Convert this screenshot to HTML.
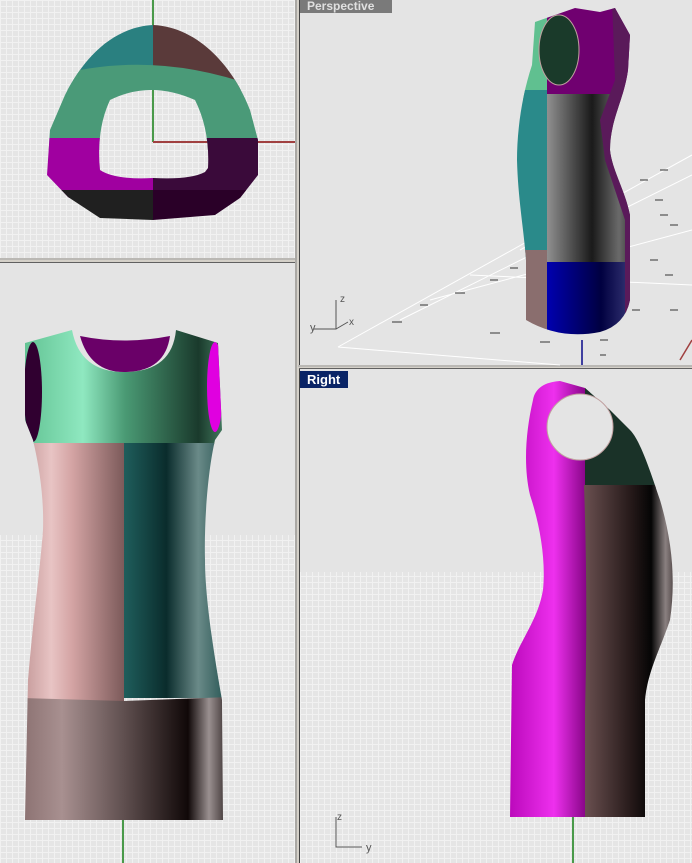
<!DOCTYPE html>
<html><head><meta charset="utf-8"><style>
html,body{margin:0;padding:0;background:#d4d0c8;}
svg{display:block}
text{font-family:"Liberation Sans",sans-serif;}
</style></head><body>
<svg width="692" height="863" viewBox="0 0 692 863" xmlns="http://www.w3.org/2000/svg">
<defs>
<pattern id="g" width="6" height="6" patternUnits="userSpaceOnUse"><rect width="6" height="6" fill="#e5e5e5"/><path d="M0 0.5H6M0.5 0V6" stroke="#f1f1f1" stroke-width="1"/></pattern>
<linearGradient id="pink" x1="0" x2="1"><stop offset="0" stop-color="#c09494"/><stop offset=".3" stop-color="#e8c4c4"/><stop offset=".5" stop-color="#d4a4a4"/><stop offset="1" stop-color="#7c5a5a"/></linearGradient>
<linearGradient id="teal" x1="0" x2="1"><stop offset="0" stop-color="#1f5e5c"/><stop offset=".4" stop-color="#0a2c2c"/><stop offset=".7" stop-color="#6a8a88"/><stop offset="1" stop-color="#1e4e4c"/></linearGradient>
<linearGradient id="bot" x1="0" x2="1"><stop offset="0" stop-color="#8a7070"/><stop offset=".2" stop-color="#a89090"/><stop offset=".5" stop-color="#5e4e4e"/><stop offset=".8" stop-color="#100808"/><stop offset=".9" stop-color="#9a9090"/><stop offset="1" stop-color="#2a2020"/></linearGradient>
<linearGradient id="grn" x1="0" x2="1"><stop offset="0" stop-color="#5fc090"/><stop offset=".3" stop-color="#8fe8c0"/><stop offset=".5" stop-color="#4a9a74"/><stop offset=".85" stop-color="#1a3a2c"/><stop offset="1" stop-color="#4e8a6c"/></linearGradient>
<linearGradient id="mag" x1="0" x2="1"><stop offset="0" stop-color="#b000b0"/><stop offset=".6" stop-color="#ee30ee"/><stop offset="1" stop-color="#7a007a"/></linearGradient>
<linearGradient id="brn" x1="0" x2="1"><stop offset="0" stop-color="#6a5050"/><stop offset=".5" stop-color="#241818"/><stop offset=".7" stop-color="#050505"/><stop offset=".85" stop-color="#8a8080"/><stop offset="1" stop-color="#2a2020"/></linearGradient>
<linearGradient id="gry" x1="0" x2="1"><stop offset="0" stop-color="#909090"/><stop offset=".5" stop-color="#1a1a1a"/><stop offset=".8" stop-color="#6a6a6a"/><stop offset="1" stop-color="#2a2a2a"/></linearGradient>
<linearGradient id="blu" x1="0" x2="1"><stop offset="0" stop-color="#0000b0"/><stop offset=".6" stop-color="#000040"/><stop offset="1" stop-color="#404080"/></linearGradient>
<clipPath id="front"><path d="M72 330 L25 343 L25 420 L33 440 C40 470 44 500 43 530 C40 570 33 620 28 680 L25 820 L223 820 L222 700 C215 660 205 600 205 560 C204 520 208 470 215 440 L222 430 L218 343 L176 330 Q172 372 124 372 Q80 372 72 330Z"/></clipPath>
<clipPath id="side"><path d="M560 381 C545 382 535 388 533 400 C526 430 523 465 530 495 C540 525 546 560 543 590 C538 620 520 640 512 665 L510 817 L645 817 L645 700 C648 670 660 650 670 620 C676 580 672 540 660 500 C650 470 640 440 630 430 L610 410 L585 388Z"/></clipPath>
<clipPath id="persp"><path d="M555 15 L535 22 L532 65 C522 95 517 130 517 160 C518 200 524 230 526 260 L526 320 Q560 340 600 332 Q625 325 630 300 L630 215 C625 190 612 170 610 150 C610 120 624 100 628 70 L630 35 L615 8 L600 12 L575 8Z"/></clipPath>
<clipPath id="ring"><path fill-rule="evenodd" clip-rule="evenodd" d="M153 25 C200 27 235 70 250 110 L258 140 L258 175 L240 198 L215 215 L153 220 L100 218 L68 197 L47 175 L50 130 L65 95 C85 55 115 27 153 25Z M110 100 Q150 80 195 100 Q210 130 208 168 L205 172 Q190 180 153 178 Q115 180 100 170 Q96 130 110 100Z"/></clipPath>
</defs>

<rect x="0" y="0" width="295" height="258" fill="url(#g)"/>
<rect x="0" y="263" width="295" height="600" fill="#e4e4e4"/>
<rect x="0" y="535" width="295" height="328" fill="url(#g)"/>
<rect x="299" y="0" width="393" height="365" fill="#e4e4e4"/>
<rect x="299" y="369" width="393" height="494" fill="#e4e4e4"/>
<rect x="299" y="572" width="393" height="291" fill="url(#g)"/>
<path d="M296 0V863" stroke="#808080" stroke-width="1"/>
<path d="M0 259H295M298 366H692" stroke="#a0a0a0"/>
<path d="M0 262.5H295M299 368.5H692" stroke="#606060"/>
<path d="M299.5 0V365M299.5 369V863" stroke="#404040"/>

<path d="M153 0V142" stroke="#4a9a4a" stroke-width="2"/>
<path d="M153 142H295" stroke="#a04040" stroke-width="2"/>
<g clip-path="url(#ring)">
<rect x="40" y="20" width="113" height="70" fill="#2a8080"/>
<rect x="153" y="20" width="110" height="70" fill="#5a3a3a"/>
<path d="M40 80 Q150 45 265 90 L265 150 L40 150Z" fill="#4a9a78"/>
<rect x="40" y="138" width="113" height="60" fill="#a000a0"/>
<rect x="153" y="138" width="112" height="60" fill="#3a0a3a"/>
<rect x="40" y="190" width="113" height="40" fill="#202020"/>
<rect x="153" y="190" width="112" height="40" fill="#2a0028"/>
</g>

<path d="M123 800V863" stroke="#4a9a4a" stroke-width="2"/>
<g clip-path="url(#front)">
<rect x="20" y="325" width="210" height="120" fill="url(#grn)"/>
<rect x="20" y="443" width="104" height="260" fill="url(#pink)"/>
<rect x="124" y="443" width="106" height="255" fill="url(#teal)"/>
<path d="M20 698 L124 701 L230 697 L230 825 L20 825Z" fill="url(#bot)"/>
<ellipse cx="33" cy="392" rx="9" ry="50" fill="#300030"/>
<ellipse cx="215" cy="387" rx="8" ry="45" fill="#e000e0"/>
</g>
<path d="M80 336 Q90 372 124 372 Q165 372 170 336 Q124 345 80 336Z" fill="#6a0068"/>

<path d="M573 810V863" stroke="#4a9a4a" stroke-width="2"/>
<g clip-path="url(#side)">
<rect x="500" y="375" width="90" height="450" fill="url(#mag)"/>
<path d="M585 375 L680 375 L680 488 L585 488Z" fill="#1a3228"/>
<path d="M584 485 L680 485 L680 712 L585 712 Q588 600 584 485Z" fill="url(#brn)"/>
<rect x="585" y="710" width="95" height="110" fill="url(#brn)"/>
</g>
<circle cx="580" cy="427" r="33" fill="#e4e4e4" stroke="#c0a0a0"/>

<g stroke="#ffffff" stroke-width="1" fill="none">
<path d="M338 347 L530 240 M338 347 L560 365 M400 320 L692 175 M430 300 L692 230 M470 275 L692 285 M520 250 L692 155"/>
</g>
<g stroke="#333" stroke-width="1">
<path d="M392 322h10M420 305h8M455 293h10M490 280h8M510 268h8M640 180h8M660 170h8M655 200h8M660 215h8M670 225h8M650 260h8M665 275h8M490 333h10M540 342h10M600 340h8M632 310h8M670 310h8M600 355h6"/>
</g>
<path d="M582 340V365" stroke="#4040a0" stroke-width="2"/>
<path d="M680 360 L692 340" stroke="#a04040" stroke-width="1.5"/>
<g clip-path="url(#persp)">
<rect x="510" y="0" width="40" height="100" fill="#60c090"/>
<rect x="510" y="90" width="38" height="175" fill="#2a8a8a"/>
<rect x="510" y="250" width="38" height="90" fill="#8a6e6e"/>
<rect x="547" y="0" width="90" height="95" fill="#700070"/>
<rect x="547" y="94" width="90" height="170" fill="url(#gry)"/>
<rect x="547" y="262" width="90" height="80" fill="url(#blu)"/>
<path d="M612 0 L640 0 L640 340 L625 340 L625 220 L605 160 L600 120 L615 80Z" fill="#5a1a5a"/>
</g>
<ellipse cx="559" cy="50" rx="20" ry="35" fill="#1a3a2a" stroke="#c0a0a0"/>
<g stroke="#555" fill="none"><path d="M336 300V329H314M336 329L348 322"/><path d="M336 817V847H362"/></g>
<text x="340" y="302" font-size="10" fill="#555">z</text>
<text x="349" y="325" font-size="10" fill="#555">x</text>
<text x="310" y="331" font-size="11" fill="#555">y</text>
<text x="337" y="820" font-size="10" fill="#555">z</text>
<text x="366" y="851" font-size="11" fill="#555">y</text>

<rect x="300" y="0" width="92" height="13" fill="#7a7a7a"/>
<text x="307" y="10" font-size="12" font-weight="bold" fill="#e0e0e0">Perspective</text>
<rect x="300" y="371" width="48" height="17" fill="#0a2466"/>
<text x="307" y="384" font-size="13" font-weight="bold" fill="#ffffff">Right</text>
</svg>
</body></html>
